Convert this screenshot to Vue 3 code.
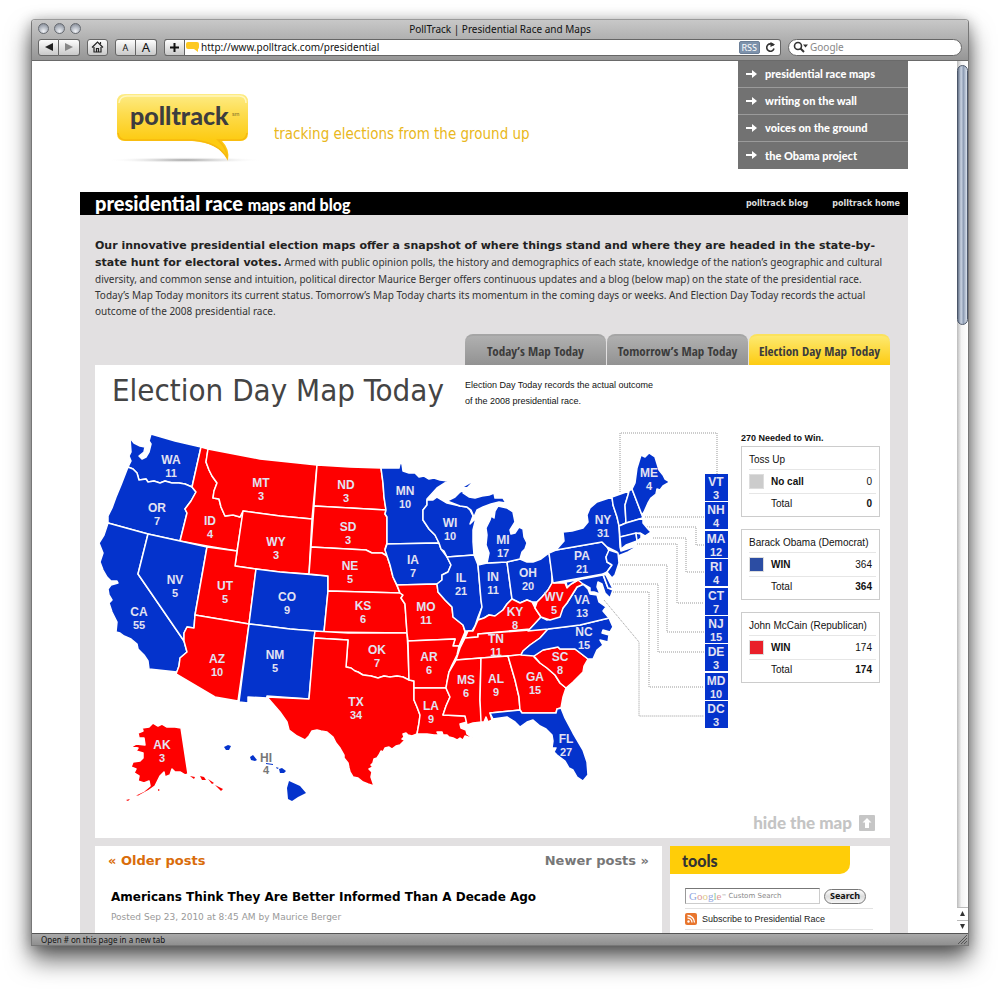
<script setup>
const B = 'blue'
const R = 'red'

const states = [
  { n: 'WA', v: 11, x: 171, y: 460, c: B, p: '130,438 134,443 140,446 145,447 144,452 139,456 142,459 146,457 149,452 151,444 149,441 151,434 175,441 201,447 192,487 185,484 179,483 172,483 165,481 160,483 154,481 148,482 146,479 139,480 137,473 133,469 128,467 131,461 129,456 131,452' },
  { n: 'OR', v: 7, x: 157, y: 508, c: B, p: '128,467 133,469 137,473 139,480 146,479 148,482 154,481 160,483 165,481 172,483 179,483 185,484 192,487 196,492 191,501 185,509 187,513 180,541 148,534 108,523 108,516 112,508 116,497 121,485' },
  { n: 'ID', v: 4, x: 210, y: 521, c: R, p: '201,447 208,449 206,462 209,470 212,476 217,483 214,491 213,498 219,499 221,507 225,516 233,515 240,517 243,513 237,551 207,546 180,541 187,513 185,509 191,501 196,492 192,487' },
  { n: 'MT', v: 3, x: 261, y: 483, c: R, p: '208,449 260,459 317,465 312,519 280,516 243,511 240,517 233,515 225,516 221,507 219,499 213,498 214,491 217,483 212,476 209,470 206,462' },
  { n: 'WY', v: 3, x: 276, y: 542, c: R, p: '243,511 280,516 312,519 309,574 280,572 256,569 235,566' },
  { n: 'CA', v: 55, x: 139, y: 612, c: B, p: '108,523 148,534 138,574 184,641 187,652 180,658 179,666 177,672 149,669 148,661 144,655 138,649 137,644 131,639 124,636 120,633 116,632 117,622 112,612 109,603 112,600 109,595 108,589 111,585 118,583 117,581 111,581 107,577 103,570 100,562 103,553 99,543 104,535' },
  { n: 'NV', v: 5, x: 175, y: 580, c: B, p: '148,534 180,541 207,547 195,615 194,628 187,627 184,633 184,641 138,574' },
  { n: 'UT', v: 5, x: 225, y: 586, c: R, p: '207,547 237,551 235,566 256,569 249,624 195,615' },
  { n: 'AZ', v: 10, x: 217, y: 659, c: R, p: '195,615 249,624 238,701 215,697 176,674 179,666 180,658 187,652 184,641 184,633 187,627 194,628' },
  { n: 'CO', v: 9, x: 287, y: 597, c: B, p: '256,569 280,572 328,576 328,591 324,632 290,629 249,624' },
  { n: 'NM', v: 5, x: 275, y: 655, c: B, p: '249,624 290,629 315,631 309,699 267,696 267,698 248,697 248,703 239,702' },
  { n: 'ND', v: 3, x: 346, y: 485, c: R, p: '317,465 350,467 381,468 383,483 384,497 386,510 350,508 314,506' },
  { n: 'SD', v: 3, x: 348, y: 527, c: R, p: '314,506 350,508 386,510 385,514 387,517 387,543 385,549 387,556 382,553 372,553 366,550 311,547' },
  { n: 'NE', v: 5, x: 350, y: 566, c: R, p: '311,547 366,550 372,553 382,553 387,556 390,565 393,577 397,586 400,593 328,591 328,576 309,574' },
  { n: 'KS', v: 6, x: 363, y: 606, c: R, p: '328,591 400,593 403,595 401,598 405,604 407,633 324,632' },
  { n: 'OK', v: 7, x: 377, y: 650, c: R, p: '315,631 348,633 407,633 408,650 409,680 403,677 397,676 390,677 384,676 378,678 371,676 363,675 358,672 355,671 351,668 346,667 348,640 314,638' },
  { n: 'TX', v: 34, x: 356, y: 702, c: R, p: '314,638 348,640 346,667 351,668 355,671 358,672 363,675 371,676 378,678 384,676 390,677 397,676 403,677 409,680 414,681 414,700 417,707 420,715 419,723 417,734 412,736 408,735 406,733 403,734 404,737 402,739 405,740 400,745 396,746 392,749 389,747 385,748 383,752 381,751 379,755 377,758 374,759 373,763 371,765 373,767 369,769 372,772 371,777 374,786 368,784 363,782 358,778 353,777 350,772 349,768 348,763 344,758 344,755 340,748 336,743 333,737 327,732 321,731 317,730 312,731 309,736 305,740 297,736 289,730 287,722 280,712 267,697 309,699' },
  { n: 'MN', v: 10, x: 405, y: 491, c: B, p: '381,468 399,468 400,463 402,464 403,471 409,473 415,473 419,477 424,476 429,479 434,478 440,480 448,481 437,488 427,499 427,505 423,510 423,520 429,529 435,535 439,543 387,544 387,517 385,514 386,510 384,497 383,483' },
  { n: 'IA', v: 7, x: 413, y: 560, c: B, p: '387,544 439,543 441,549 447,557 451,565 448,572 442,575 442,580 437,584 397,585 393,577 390,565 387,556 385,550' },
  { n: 'MO', v: 11, x: 426, y: 607, c: R, p: '397,585 437,584 438,592 445,600 452,607 453,617 463,625 465,632 462,639 459,646 453,646 455,639 408,641 407,633 405,604 401,598 403,595 400,593' },
  { n: 'AR', v: 6, x: 429, y: 657, c: R, p: '408,641 455,639 453,646 459,646 457,655 452,665 449,672 447,682 446,688 414,688 414,681 409,680' },
  { n: 'LA', v: 9, x: 431, y: 706, c: R, p: '414,688 446,688 450,697 446,706 443,715 465,716 467,722 460,724 461,728 466,730 467,734 474,739 468,737 465,736 463,740 460,738 457,740 453,738 449,737 447,735 443,735 442,732 437,732 439,735 434,735 427,734 417,734 419,723 420,715 417,707 414,700' },
  { n: 'WI', v: 10, x: 450, y: 523, c: B, p: '427,500 433,500 437,497 442,500 447,503 460,506 467,507 470,510 473,516 470,524 476,518 473,530 473,542 474,555 447,557 444,551 441,549 439,543 435,535 429,529 423,520 423,510 427,505' },
  { n: 'IL', v: 21, x: 461, y: 578, c: B, p: '447,557 474,555 478,565 481,600 482,607 478,617 475,626 472,631 465,631 463,625 453,617 452,607 445,600 438,592 437,584 442,580 442,575 448,572 451,565' },
  { n: 'IN', v: 11, x: 493, y: 577, c: B, p: '478,565 487,563 507,562 512,599 507,604 503,610 495,616 489,615 484,618 478,620 482,607 481,600' },
  { n: 'OH', v: 20, x: 528, y: 573, c: B, p: '507,562 520,559 527,562 533,562 541,559 549,553 552,573 552,583 548,590 542,597 537,602 532,602 527,600 520,603 512,599' },
  { n: 'MI', v: 17, x: 503, y: 540, c: B, p: '487,563 489,553 486,545 487,535 486,528 490,520 491,516 494,518 495,511 498,506 507,508 513,512 515,522 510,530 511,534 515,533 519,527 523,529 524,537 527,543 525,549 522,552 520,559 507,562' },
  { n: '', c: B, p: '447,501 455,497 460,492 464,490 463,493 469,497 475,498 482,496 489,495 494,493 495,498 503,498 506,503 499,502 491,504 483,507 477,510 474,517 471,510 467,507 460,506' },
  { n: 'KY', v: 8, x: 515, y: 612, c: R, p: '512,599 520,603 527,600 532,602 535,608 541,617 530,629 478,634 478,637 465,638 468,631 473,631 478,620 484,618 489,615 495,616 503,610 507,604' },
  { n: 'TN', v: 11, x: 496, y: 639, c: R, p: '465,638 478,637 478,634 530,630 548,629 540,638 530,645 523,651 521,655 456,660 460,648' },
  { n: 'MS', v: 6, x: 466, y: 680, c: R, p: '456,660 481,658 480,700 482,722 473,723 467,725 465,716 443,715 446,706 450,697 446,688 447,682 449,672' },
  { n: 'AL', v: 9, x: 496, y: 679, c: R, p: '481,658 508,656 515,680 519,697 520,710 490,713 492,720 488,722 486,717 484,722 481,722 480,700' },
  { n: 'GA', v: 15, x: 535, y: 677, c: R, p: '508,656 535,653 534,657 540,663 547,668 555,675 560,683 566,688 563,697 561,708 557,709 556,713 522,713 520,710 519,697 515,680' },
  { n: 'FL', v: 27, x: 566, y: 739, c: B, p: '490,713 520,710 522,713 556,713 557,709 561,708 565,718 573,733 583,750 587,762 588,775 583,781 577,777 573,770 569,768 565,761 561,758 557,755 554,752 556,748 552,748 553,741 552,735 546,729 540,726 533,720 527,722 520,727 515,722 507,717 493,719' },
  { n: 'SC', v: 8, x: 560, y: 657, c: R, p: '534,656 543,650 558,647 560,649 575,649 588,659 584,666 583,672 573,682 566,688 560,683 555,675 547,668 540,663' },
  { n: 'NC', v: 15, x: 584, y: 632, c: B, p: '548,629 580,625 609,618 613,627 610,632 603,630 602,633 609,635 608,642 600,640 603,645 597,650 593,659 588,659 575,649 560,649 558,647 543,650 534,656 521,655 523,651 530,645 540,638' },
  { n: 'VA', v: 13, x: 582, y: 600, c: B, p: '541,617 547,620 557,617 563,608 567,603 572,595 577,587 583,584 588,589 590,594 597,595 599,602 606,607 603,611 609,618 580,625 548,629 528,631' },
  { n: 'WV', v: 5, x: 554, y: 597, c: R, p: '553,576 554,583 565,583 567,588 571,584 578,580 584,584 577,587 572,595 567,603 563,608 560,617 550,620 541,617 535,608 537,602 542,597 548,590 552,583' },
  { n: 'PA', v: 21, x: 582, y: 556, c: B, p: '549,553 556,550 602,542 607,547 609,551 606,557 607,562 612,565 607,572 603,574 553,583' },
  { n: 'NY', v: 31, x: 603, y: 520, c: B, p: '556,550 564,541 563,532 572,531 583,528 588,522 587,515 590,508 597,502 612,497 613,505 617,517 619,525 620,547 621,551 633,547 638,546 628,552 618,556 617,552 607,547 602,542' },
  { n: '', c: B, p: '612,497 629,491 628,495 625,505 626,523 619,526 617,517 613,505' },
  { n: '', c: B, p: '629,491 632,489 642,515 643,518 626,523 625,505 628,495' },
  { n: 'ME', v: 4, x: 649, y: 473, c: B, p: '632,489 635,483 637,468 641,455 645,457 649,453 655,457 659,470 663,475 665,479 670,482 663,486 660,490 657,489 656,494 651,498 648,503 644,512 642,515' },
  { n: '', c: B, p: '619,526 626,523 643,518 643,523 648,529 651,532 645,536 640,533 620,537' },
  { n: '', c: B, p: '620,537 636,533 637,541 626,545 621,549' },
  { n: '', c: B, p: '636,533 641,534 641,538 637,541' },
  { n: '', c: B, p: '609,550 618,553 619,563 615,575 612,578 607,572 612,565 607,562 606,557' },
  { n: '', c: B, p: '566,582 603,575 608,588 613,590 610,598 605,593 602,584 598,582 597,587 600,594 594,592 590,592 590,588 583,584 578,580 571,584 567,587' },
  { n: '', c: B, p: '603,574 606,575 609,581 613,589 608,588' },
  { n: 'AK', v: 3, x: 162, y: 745, c: R, p: '138,733 143,731 142,728 149,727 153,723 158,726 162,724 167,727 175,727 181,728 188,774 185,775 180,772 175,772 172,769 170,775 165,777 164,772 160,776 155,786 148,791 139,796 131,797 144,791 150,786 149,781 144,783 138,781 139,776 134,773 136,769 131,767 133,762 140,761 143,758 143,753 136,751 138,748 131,747 136,744 145,745 144,738 139,738' },
]

const islands = [
  { c: R, p: '190,776 195,777 194,779' },
  { c: R, p: '200,776 204,777 206,780 202,780' },
  { c: R, p: '208,779 214,783 212,784' },
  { c: R, p: '215,785 223,789 221,791' },
  { c: R, p: '126,800 130,799 128,801' },
  { c: R, p: '158,789 160,790 158,791' },
  { c: B, p: '224,747 228,745 231,746 229,750 226,750' },
  { c: B, p: '250,757 253,755 257,760 255,761 251,760' },
  { c: B, p: '266,763 273,764 273,765 266,764' },
  { c: B, p: '276,767 279,768 277,769' },
  { c: B, p: '279,769 282,768 286,771 284,773 280,773' },
  { c: B, p: '289,781 300,786 306,793 298,797 292,801 288,799 287,788' },
  { c: B, p: '464,487 471,483 467,487' },
]

const leaders = [
  '620,492 620,433 717,433 717,474',
  '645,517 704,517',
  '647,527 696,527 696,545 704,545',
  '653,538 686,538 686,572 704,572',
  '637,544 677,544 677,603 704,603',
  '620,565 667,565 667,632 704,632',
  '613,584 658,584 658,652 704,652',
  '613,592 649,592 649,687 704,687',
  '604,600 639,642 639,716 704,716',
]

const small = [
  ['VT', 3], ['NH', 4], ['MA', 12], ['RI', 4], ['CT', 7],
  ['NJ', 15], ['DE', 3], ['MD', 10], ['DC', 3],
].map(([n, v], i) => ({ n, v, top: 474 + Math.round(i * 28.4) }))

const legend = [
  { title: 'Toss Up', label: 'No call', votes: 0, c: 'none' },
  { title: 'Barack Obama (Democrat)', label: 'WIN', votes: 364, c: B },
  { title: 'John McCain (Republican)', label: 'WIN', votes: 174, c: R },
]

const nav = ['presidential race maps', 'writing on the wall', 'voices on the ground', 'the Obama project']
</script>

<template>
  <div class="desktop">
    <div class="window">
      <header class="chrome">
        <div class="titlebar">
          <div class="lights"><i></i><i></i><i></i></div>
          <div class="title">PollTrack | Presidential Race and Maps</div>
        </div>
        <div class="toolbar">
          <div class="group">
            <button aria-label="Back"><svg width="8" height="8"><path d="M0 4L8 0V8Z" fill="#222" /></svg></button>
            <button aria-label="Forward"><svg width="8" height="8"><path d="M8 4L0 0V8Z" fill="#888" /></svg></button>
          </div>
          <div class="group">
            <button aria-label="Home">
              <svg width="13" height="12" fill="none" stroke="#222" stroke-width="1.2"><path d="M1 6.5L6.500 1L12 6.500M3 6V11H10V6M5.500 11V7.500H7.500V11M9.500 3V1" /></svg>
            </button>
          </div>
          <div class="group">
            <button class="small-a">A</button>
            <button class="big-a">A</button>
          </div>
          <div class="address">
            <button aria-label="Add bookmark"><svg width="9" height="9"><path d="M4.500 0V9M0 4.500H9" stroke="#111" stroke-width="2" /></svg></button>
            <svg class="favicon" width="13" height="10"><path d="M2 0H11Q13 0 13 2V5Q13 7 12 7L12 10L8 7H2Q0 7 0 5V2Q0 0 2 0Z" fill="#fdc922" /></svg>
            <input aria-label="Address" value="http://www.polltrack.com/presidential" />
            <span class="rss">RSS</span>
            <svg class="reload" width="11" height="11" viewBox="0 0 11 11"><path d="M8.500 3.500A3.700 3.700 0 1 0 9 6.500" fill="none" stroke="#333" stroke-width="1.600" /><path d="M5.500 0L10 2.500L5.500 5Z" fill="#333" /></svg>
          </div>
          <div class="search">
            <svg width="16" height="12"><circle cx="5" cy="5" r="3.500" fill="none" stroke="#333" stroke-width="1.600" /><path d="M7.500 7.500L11 11" stroke="#333" stroke-width="2" /><path d="M10 3.500H15L12.500 6.500Z" fill="#333" /></svg>
            <input aria-label="Search Google" placeholder="Google" />
          </div>
        </div>
      </header>

      <div class="body">
        <main class="page">
          <div class="masthead">
            <svg class="logo" width="160" height="75" viewBox="104 92 160 75" role="img" aria-label="polltrack">
              <defs>
                <linearGradient id="gold" x1="0" y1="0" x2="0" y2="1"><stop offset="0" stop-color="#fdec86" /><stop offset="0.300" stop-color="#fddc4e" /><stop offset="0.700" stop-color="#fdcb12" /></linearGradient>
                <radialGradient id="shade"><stop offset="0" stop-color="#999" /><stop offset="1" stop-color="#fff" stop-opacity="0" /></radialGradient>
              </defs>
              <ellipse cx="185" cy="160" rx="78" ry="3" fill="url(#shade)" />
              <path d="M125 94H240Q248 94 248 102V133Q248 141 240 141H222Q230 149 228 160Q220 143 192 141H125Q117 141 117 133V102Q117 94 125 94Z" fill="url(#gold)" />
              <path d="M118 133Q119 140 126 140H193Q218 142 227 158Q227 148 218 140H240Q246 140 247 133" fill="none" stroke="#f7b90f" stroke-width="1.500" />
              <path d="M119 103Q120 96 127 96H239Q246 96 246 103" fill="none" stroke="#fff6bd" stroke-width="1.500" />
              <text x="130" y="125" class="logo-text">polltrack</text>
              <text x="232" y="116" class="logo-sm">sm</text>
            </svg>
            <p class="tagline">tracking elections from the ground up</p>
            <nav class="menu">
              <a v-for="item in nav" :key="item" href="#">
                <svg width="11" height="8"><path d="M0 4H8" stroke="#fff" stroke-width="2" /><path d="M6 0L11 4L6 8Z" fill="#fff" /></svg>{{ item }}
              </a>
            </nav>
          </div>

          <div class="bar">
            <h1>presidential race <small>maps and blog</small></h1>
            <a href="#">polltrack blog</a>
            <a href="#">polltrack home</a>
          </div>

          <div class="content">
            <p class="intro">
              <strong>Our innovative presidential election maps offer a snapshot of where things stand and where they are headed in the state-by-<br />state hunt for electoral votes.</strong>
              Armed with public opinion polls, the history and demographics of each state, knowledge of the nation’s geographic and cultural<br />
              diversity, and common sense and intuition, political director Maurice Berger offers continuous updates and a blog (below map) on the state of the presidential race.<br />
              Today’s Map Today monitors its current status. Tomorrow’s Map Today charts its momentum in the coming days or weeks. And Election Day Today records the actual<br />
              outcome of the 2008 presidential race.
            </p>

            <div class="tabs">
              <button>Today’s Map Today</button>
              <button>Tomorrow’s Map Today</button>
              <button class="active">Election Day Map Today</button>
            </div>

            <section class="panel">
              <div class="panel-head">
                <h2>Election Day Map Today</h2>
                <p>Election Day Today records the actual outcome<br />of the 2008 presidential race.</p>
              </div>
              <div class="panel-body">
                <svg class="map" viewBox="95 425 640 390" role="img" aria-label="Electoral map">
                  <polyline v-for="l in leaders" :key="l" :points="l" class="leader" />
                  <polygon v-for="s in states" :key="s.p" :points="s.p" :class="['state', s.c]" />
                  <polygon v-for="s in islands" :key="s.p" :points="s.p" :class="s.c" />
                  <g v-for="s in states.filter((t) => t.n)" :key="s.n" class="label">
                    <text :x="s.x" :y="s.y + 4">{{ s.n }}</text>
                    <text :x="s.x" :y="s.y + 17" class="num">{{ s.v }}</text>
                  </g>
                  <g class="label muted">
                    <text x="266" y="762">HI</text>
                    <text x="266" y="774" class="num">4</text>
                  </g>
                  <g v-for="s in small" :key="s.n" class="label">
                    <rect x="705" :y="s.top" width="23" height="27" class="blue" />
                    <text x="716" :y="s.top + 12">{{ s.n }}</text>
                    <text x="716" :y="s.top + 25" class="num">{{ s.v }}</text>
                  </g>
                </svg>
                <div class="legend">
                  <strong>270 Needed to Win.</strong>
                  <table v-for="g in legend" :key="g.title">
                    <colgroup><col class="col-key" /><col /><col class="col-votes" /></colgroup>
                    <tbody>
                      <tr><th colspan="3">{{ g.title }}</th></tr>
                      <tr class="mid"><td><i :class="['swatch', g.c]"></i></td><td><b>{{ g.label }}</b></td><td>{{ g.votes }}</td></tr>
                      <tr class="total"><td></td><td>Total</td><td><b>{{ g.votes }}</b></td></tr>
                    </tbody>
                  </table>
                </div>
              </div>
              <button class="hide">
                hide the map
                <svg width="16" height="16"><rect width="16" height="16" rx="1" fill="#c6c6c6" /><path d="M8 3L12.500 7.500H10V13H6V7.500H3.500Z" fill="#fff" /></svg>
              </button>
            </section>

            <div class="lower">
              <section class="posts">
                <div class="pager"><a href="#" class="older">« Older posts</a><a href="#">Newer posts »</a></div>
                <h3>Americans Think They Are Better Informed Than A Decade Ago</h3>
                <p>Posted Sep 23, 2010 at 8:45 AM by Maurice Berger</p>
              </section>
              <aside class="tools">
                <h2>tools</h2>
                <form @submit.prevent>
                  <label class="field">
                    <span class="google"><b>G</b><b>o</b><b>o</b><b>g</b><b>l</b><b>e</b></span><sup>™</sup>
                    <input aria-label="Custom Search" placeholder="Custom Search" />
                  </label>
                  <button>Search</button>
                </form>
                <a href="#" class="feed">
                  <svg width="12" height="12"><rect width="12" height="12" rx="2" fill="#e8752d" /><circle cx="3.500" cy="8.500" r="1.200" fill="#fff" /><path d="M2.500 5A4.500 4.500 0 0 1 7 9.500M2.500 2.500A7 7 0 0 1 9.500 9.500" fill="none" stroke="#fff" stroke-width="1.300" /></svg>
                  Subscribe to Presidential Race
                </a>
              </aside>
            </div>
          </div>
        </main>
        <div class="scroll" aria-hidden="true">
          <div class="thumb"></div>
          <div class="arrows">
            <svg width="11" height="26"><path d="M0 .5H11M0 13.500H11" stroke="#bbb" /><path d="M5.500 4L8 9H3Z M5.500 22L8 17H3Z" fill="#333" /></svg>
          </div>
        </div>
      </div>

      <footer class="status">
        <span>Open # on this page in a new tab</span>
        <svg width="11" height="11"><path d="M1 10L10 1M4 10L10 4M7 10L10 7" stroke="#555" /></svg>
      </footer>
    </div>
  </div>
</template>

<style>
html, body { margin: 0; background: #fff; }
</style>

<style scoped>
* { box-sizing: border-box; }
h1, h2, h3, p { margin: 0; font-weight: normal; }
button, input { font: inherit; color: inherit; margin: 0; padding: 0; border: 0; background: none; min-width: 0; }
input { outline: 0; }
a { color: inherit; text-decoration: none; }
svg { display: block; flex: none; }
.desktop { display: flex; height: 100vh; padding: 19px 31px 43px; overflow: hidden; }
.window {
  flex: 1; min-width: 0;
  display: flex; flex-direction: column;
  border: 1px solid #777; border-top-color: #999; border-radius: 4px 4px 0 0; background: #fff;
  box-shadow: 0 14px 24px rgba(0, 0, 0, 0.6), 0 2px 14px rgba(0, 0, 0, 0.3);
  font-family: "DejaVu Sans", sans-serif;
  font-variant-ligatures: none;
}
.chrome { background: linear-gradient(#c8c8c8, #969696); border-bottom: 1px solid #6a6a6a; border-radius: 3px 3px 0 0; font-family: "Noto Sans", sans-serif; font-size: 10px; color: #111; }
.titlebar { display: grid; grid-template-columns: 60px 1fr 60px; align-items: center; height: 17px; }
.title { text-align: center; line-height: 16px; }
.lights { display: flex; gap: 5px; padding-left: 6px; }
.lights i { width: 11px; height: 11px; border-radius: 50%; border: 1px solid #666a70; background: radial-gradient(circle at 50% 80%, #f0f2f6, #a9afb9 60%, #7a808c); }
.toolbar { display: flex; align-items: center; height: 23px; padding: 0 6px 3px; gap: 7px; }
.group { display: flex; }
.group button, .address button { width: 21px; height: 17px; display: flex; align-items: center; justify-content: center; border: 1px solid #666; background: linear-gradient(#fdfdfd, #c9c9c9); line-height: 15px; }
.group button + button { border-left: 0; }
.group button:first-child { border-radius: 3px 0 0 3px; }
.group button:last-child { border-radius: 0 3px 3px 0; }
.group button:only-child { border-radius: 3px; }
.small-a { font-size: 9px; }
.group .big-a { font-size: 13px; }
.address { flex: 1; display: flex; align-items: center; height: 17px; background: #fff; border: 1px solid #666; border-left: 0; border-radius: 3px; padding-right: 4px; }
.address button { border-radius: 3px 0 0 3px; }
.address input { flex: 1; height: 15px; padding-left: 2px; }
.favicon { margin-left: 1px; }
.rss { font-size: 9px; line-height: 11px; color: #fff; background: #7d92ac; border: 1px solid #6c7f97; border-radius: 2px; padding: 0 2px; }
.reload { margin-left: 5px; }
.search { width: 174px; height: 17px; display: flex; align-items: center; gap: 1px; padding: 0 4px; background: #fff; border: 1px solid #666; border-radius: 9px; }
.search input { flex: 1; height: 15px; }
input::placeholder { color: #888; opacity: 1; }

.body { flex: 1; display: flex; min-height: 0; overflow: hidden; }
.page { flex: 1; min-width: 0; padding: 0 49px 0 48px; overflow: hidden; }
.masthead { display: flex; height: 131px; }
.logo { margin: 31px 0 0 24px; }
.logo-text { font: 900 25px Lato, sans-serif; fill: #3d3d3f; }
.logo-sm { font: 6px Lato, sans-serif; fill: #86702a; }
.tagline { flex: 1; padding: 62px 0 0 10px; font: 15px/22px "DejaVu Sans Condensed", sans-serif; color: #e9b720; }
.menu { width: 170px; align-self: flex-start; background: #727272; }
.menu a { display: flex; align-items: center; gap: 8px; height: 27px; padding: 0 0 1px 8px; font: 900 11px Lato, sans-serif; color: #fff; border-bottom: 1px solid #9b9b9b; }
.menu a:last-child { border-bottom: 0; }
.bar { display: flex; align-items: center; height: 23px; padding: 0 8px 0 15px; background: #000; color: #fff; font: bold 8px "DejaVu Sans", sans-serif; }
.bar h1 { flex: 1; font: 900 20px/22px Lato, sans-serif; }
.bar small { font-size: 16px; }
.bar a { margin-left: 24px; color: #ddd; }
.content { background: #e2e0e1; padding: 22px 18px 40px 15px; }
.intro { font: 10px/16px "Noto Sans", sans-serif; color: #333; white-space: nowrap; height: 97px; }
.intro strong { font: bold 11px/16px "DejaVu Sans", sans-serif; color: #222; }
.tabs { display: flex; justify-content: flex-end; gap: 1px; }
.tabs button { width: 141px; height: 31px; border-radius: 8px 8px 0 0; background: linear-gradient(#b0b0b0, #929292); border-top: 2px solid #a5a5a5; color: #3c3c3c; font: bold 13px "Open Sans Condensed", sans-serif; white-space: nowrap; }
.tabs .active { background: linear-gradient(#fde96f, #fdcb12); border-top-color: #fbe25c; }
.panel { background: #fff; display: flex; flex-direction: column; padding-bottom: 7px; }
.panel-head { display: grid; grid-template-columns: 353px 1fr; height: 60px; padding-left: 17px; }
.panel-head h2 { font: 31px/50px "DejaVu Sans Condensed", sans-serif; color: #444; white-space: nowrap; }
.panel-head p { font: 9px/16px "Liberation Sans", sans-serif; padding-top: 12px; color: #111; }
.panel-body { display: grid; grid-template-columns: 1fr 139px; gap: 6px; padding-right: 10px; }
.map { width: 100%; height: auto; }
.state { stroke: #fff; stroke-width: 1.5; stroke-linejoin: round; }
.map .blue { fill: #0433cc; }
.map .red { fill: #fe0000; }
.leader { fill: none; stroke: #999; stroke-dasharray: 1 1; }
.label { font: bold 12px "Liberation Sans", sans-serif; text-anchor: middle; fill: #e2e2f2; }
.label .num { font-size: 11px; }
.muted { fill: #777; }
.legend { display: flex; flex-direction: column; padding-top: 7px; font: 10px "Liberation Sans", sans-serif; color: #111; }
.legend > strong { font-size: 9px; line-height: 12px; margin-bottom: 2px; }
.legend table { border-collapse: separate; border-spacing: 0; width: 100%; border: 1px solid #ccc; padding: 0 3px 0 7px; margin-bottom: 12px; table-layout: fixed; }
.col-key { width: 22px; }
.col-votes { width: 34px; }
.legend th { text-align: left; font-weight: normal; height: 22px; padding: 3px 0 0; }
.legend td { height: 22px; padding: 0; }
.legend td:last-child { text-align: right; padding-right: 4px; }
.legend .mid td { height: 25px; border-top: 1px solid #e6e6e6; border-bottom: 1px solid #e6e6e6; }
.legend .total td { padding-bottom: 4px; }
.swatch { display: block; width: 15px; height: 15px; border: 1px solid #ddd; }
.swatch.none { background: #ccc; }
.swatch.blue { background: #2c4da3; }
.swatch.red { background: #e9202a; }
.hide { align-self: flex-end; display: flex; align-items: center; gap: 7px; height: 16px; margin-right: 15px; font: 900 17px/16px Lato, sans-serif; color: #c4c4c4; }
.lower { display: grid; grid-template-columns: 1fr 220px; gap: 8px; margin-top: 8px; }
.posts, .tools { background: #fff; min-height: 160px; }
.posts { padding: 5px 13px; }
.pager { display: flex; justify-content: space-between; font-size: 13px; line-height: 20px; font-weight: bold; color: #777; }
.older { color: #d96c0a; }
.posts h3 { margin: 16px 0 0 3px; font-size: 12px; line-height: 20px; font-weight: bold; color: #000; }
.posts p { margin: 2px 0 0 3px; font-size: 9px; line-height: 16px; color: #999; }
.tools h2 { width: 180px; height: 28px; padding-left: 12px; background: #ffcd08; border-radius: 0 0 10px 0; font: 900 16px/29px Lato, sans-serif; color: #333; }
.tools form { display: flex; align-items: center; gap: 4px; margin: 14px 17px 0 15px; padding-bottom: 4px; border-bottom: 1px solid #e2e2e2; }
.field { width: 135px; height: 16px; display: flex; align-items: center; padding-left: 3px; border: 1px solid #ccc; border-top-color: #777; border-left-color: #999; font-size: 7px; }
.google { font: 11px "Liberation Serif", serif; }
.google b { font-weight: normal; color: #8fa5e0; }
.google b:nth-child(2), .google b:nth-child(6) { color: #dd9a9a; }
.google b:nth-child(3) { color: #ddcb8a; }
.google b:nth-child(5) { color: #93c79b; }
.field sup { font-size: 5px; color: #999; }
.field input { flex: 1; width: 60px; padding-left: 2px; font-size: 7px; }
.tools form button { width: 42px; height: 15px; border: 1px solid #777; border-radius: 8px; background: linear-gradient(#fff, #ddd 50%, #f6f6f6); font: bold 9px/12px "Noto Sans", sans-serif; color: #111; }
.feed { display: flex; align-items: center; gap: 5px; height: 21px; margin: 0 17px 0 15px; border-bottom: 1px solid #e2e2e2; font: 9px "Liberation Sans", sans-serif; color: #222; }
.scroll { width: 11px; display: flex; flex-direction: column; justify-content: space-between; padding-top: 4px; background: linear-gradient(90deg, #bbb, #f4f4f4 40%, #fff); }
.thumb { height: 30%; border-radius: 6px; border: 1px solid #4b5669; background: linear-gradient(90deg, #66748a, #c9d3e2 35%, #8e9db4 60%, #dbe3ee); }
.arrows { background: #fff; }
.status { display: flex; align-items: center; justify-content: space-between; height: 12px; padding-left: 9px; background: linear-gradient(#aaa, #8f8f8f); border-top: 1px solid #555; font: 8px/11px "Noto Sans", sans-serif; color: #111; }
</style>
